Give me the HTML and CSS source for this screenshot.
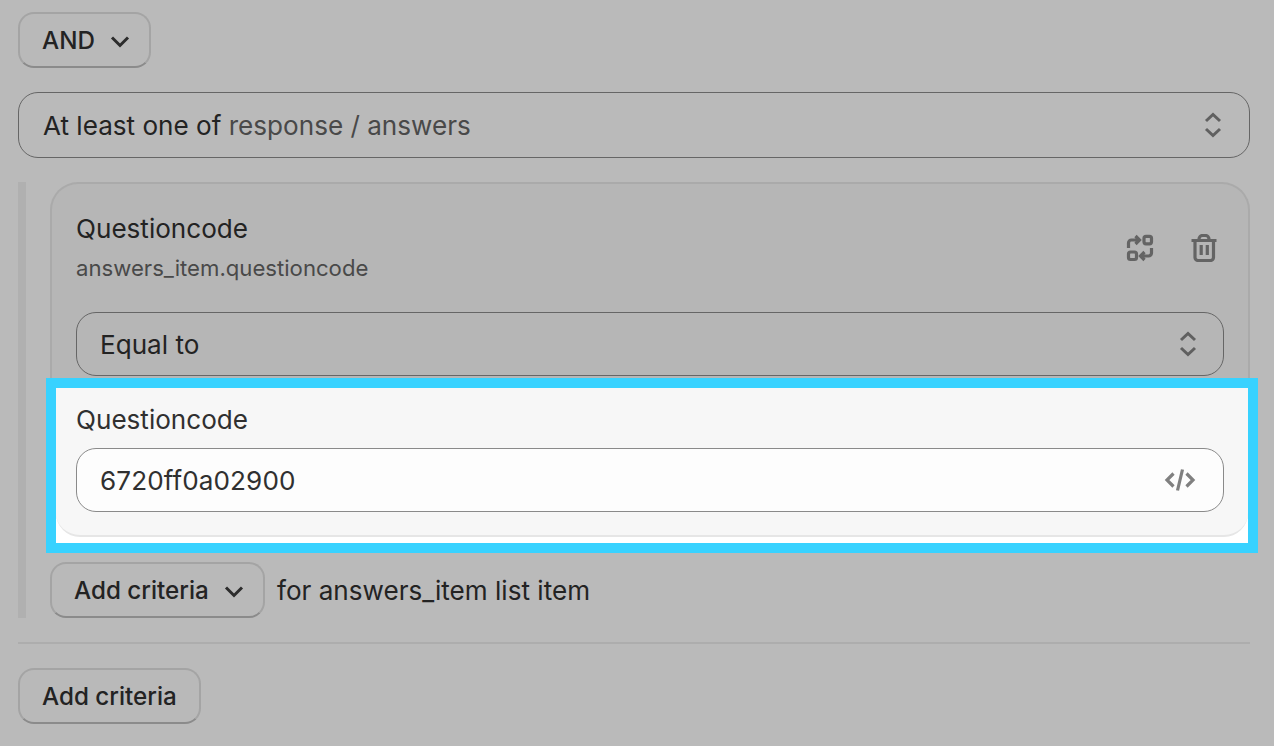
FILE: index.html
```html
<!DOCTYPE html>
<html lang="en">
<head>
    <meta charset="UTF-8">
    <title>Criteria</title>
    <link rel="stylesheet" href="styles.css">
</head>
<body>
    <div class="page">
        <button class="btn btn-and">AND
            <svg class="chevron" viewBox="0 0 20 14"><path d="M2 2.500 10 10.500l8-8"/></svg>
        </button>

        <div class="select select-top">
            <span>At least one of <span class="muted">response / answers</span></span>
            <svg class="updown" viewBox="0 0 20 32"><path d="M3 12 10 5.500 17 12M3 20l7 6.500L17 20"/></svg>
        </div>

        <div class="group">
            <div class="bar"></div>
            <div class="group-body">
                <div class="card">
                    <div class="card-head">
                        <div class="card-text">
                            <div class="card-title">Questioncode</div>
                            <div class="card-sub">answers_item.questioncode</div>
                        </div>
                        <div class="card-icons">
                            <svg class="icon" viewBox="0 0 28 28">
                                <rect x="18" y="2.300" width="7.500" height="7.500" rx="2"/>
                                <rect x="2.500" y="18" width="8" height="7.500" rx="2"/>
                                <path d="M2.500 14V9a3 3 0 0 1 3-3H13M9.500 2l4 4-4 4"/>
                                <path d="M25.500 14v5a3 3 0 0 1-3 3H15M18.500 18l-4 4 4 4"/>
                            </svg>
                            <svg class="icon icon-trash" viewBox="0 0 28 28">
                                <path d="M1.500 6.500h25M9 6.500V5a3.500 3.500 0 0 1 3.500-3.500h3A3.500 3.500 0 0 1 19 5v1.500"/>
                                <path d="M5 6.500v17a3 3 0 0 0 3 3h12.500a3 3 0 0 0 3-3v-17M11.200 11v10M17.300 11v10"/>
                            </svg>
                        </div>
                    </div>
                    <div class="select select-inner">
                        <span>Equal to</span>
                        <svg class="updown" viewBox="0 0 20 32"><path d="M3 12 10 5.500 17 12M3 20l7 6.500L17 20"/></svg>
                    </div>
                    <div class="highlight">
                        <div class="field">
                            <div class="field-label">Questioncode</div>
                            <div class="input">
                                <span>6720ff0a02900</span>
                                <svg class="code" viewBox="0 0 32 24"><path d="M9.500 5.500 3 12l6.500 6.500M22.500 5.500 29 12l-6.500 6.500M18.500 1.500l-5 21"/></svg>
                            </div>
                        </div>
                    </div>
                </div>
                <div class="add-row">
                    <button class="btn btn-add">Add criteria
                        <svg class="chevron" viewBox="0 0 20 14"><path d="M2 2.500 10 10.500l8-8"/></svg>
                    </button>
                    <span>for answers_item list item</span>
                </div>
            </div>
        </div>

        <hr class="divider">

        <button class="btn btn-last">Add criteria</button>
    </div>
</body>
</html>
```

FILE: styles.css
```css
html, body {
    margin: 0;
    padding: 0;
    height: 100%;
    overflow: hidden;
}

body {
    background: #bababa;
    color: #232323;
    font-family: 'Inter', 'Liberation Sans', sans-serif;
    font-size: 26.1px;
}

.page {
    padding: 12px 24px 0 18px;
    display: flex;
    flex-direction: column;
    align-items: flex-start;
}

.btn {
    display: inline-flex;
    align-items: center;
    height: 56px;
    box-sizing: border-box;
    background: #b9b9b9;
    border: 2px solid #a4a4a4;
    border-bottom-color: #8b8b8b;
    border-radius: 16px;
    color: #232323;
    font-family: inherit;
    font-size: 24.2px;
    font-weight: 500;
    padding: 0 22px;
    white-space: nowrap;
}

.chevron {
    flex-shrink: 0;
    width: 20px;
    height: 14px;
    margin-top: 4px;
    fill: none;
    stroke: #2c2c2c;
    stroke-width: 3;
}

.btn-and {
    width: 133px;
    gap: 15px;
}

.select {
    display: flex;
    align-items: center;
    justify-content: space-between;
    box-sizing: border-box;
    border: 1px solid #666;
    border-radius: 20px;
}

.select-top {
    width: 1232px;
    height: 66px;
    margin-top: 24px;
    padding: 0 26px 0 24px;
}

.muted {
    color: #494949;
}

.updown {
    width: 20px;
    height: 32px;
    fill: none;
    stroke: #606060;
    stroke-width: 3;
}

.group {
    display: flex;
    width: 1232px;
    height: 436px;
    margin-top: 24px;
}

.bar {
    width: 8px;
    background: #b0b0b0;
}

.group-body {
    margin-left: 24px;
    width: 1200px;
    display: flex;
    flex-direction: column;
}

.card {
    box-sizing: border-box;
    height: 371px;
    padding: 26px 24px 0 24px;
    background: #b6b6b6;
    border: 2px solid #aaa;
    border-bottom: 0;
    border-radius: 28px 28px 0 0;
}

.card-head {
    display: flex;
    justify-content: space-between;
    align-items: center;
    height: 82px;
    margin-top: -3px;
}

.card-text {
    margin-top: -3px;
}

.card-title {
    line-height: 36px;
}

.card-sub {
    margin-top: 6px;
    color: #494949;
    font-size: 22.15px;
    line-height: 30px;
}

.card-icons {
    display: flex;
    gap: 36px;
    margin-right: 6px;
}

.icon {
    width: 28px;
    height: 28px;
    fill: none;
    stroke: #646464;
    stroke-width: 3.2;
}

.select-inner {
    height: 64px;
    margin-top: 23px;
    padding: 0 25px 0 23px;
}

.highlight {
    margin: 2px -34px 0 -30px;
    border: 10px solid #38d2ff;
    background: #fff;
    height: 155px;
}

.field {
    box-sizing: border-box;
    height: 149px;
    padding: 14px 24px 0 20px;
    background: #f7f7f7;
    border-bottom: 2px solid #e6e6e6;
    border-radius: 0 0 24px 24px;
}

.field-label {
    line-height: 36px;
    color: #303030;
}

.input {
    display: flex;
    align-items: center;
    justify-content: space-between;
    box-sizing: border-box;
    height: 64px;
    margin-top: 10px;
    padding: 0 27px 0 23px;
    background: #fdfdfd;
    border: 1px solid #8a8a8a;
    border-radius: 20px;
    color: #303030;
    letter-spacing: 0.1px;
}

.code {
    width: 32px;
    height: 24px;
    fill: none;
    stroke: #808080;
    stroke-width: 3.2;
}

.add-row {
    display: flex;
    align-items: center;
    gap: 12px;
    margin-top: 9px;
}

.btn-add {
    width: 215px;
    gap: 15px;
    padding: 0 22px;
}

.divider {
    width: 1232px;
    margin: 24px 0 0;
    border: 0;
    border-top: 2px solid #adadad;
}

.btn-last {
    margin-top: 24px;
    width: 183px;
}
```
